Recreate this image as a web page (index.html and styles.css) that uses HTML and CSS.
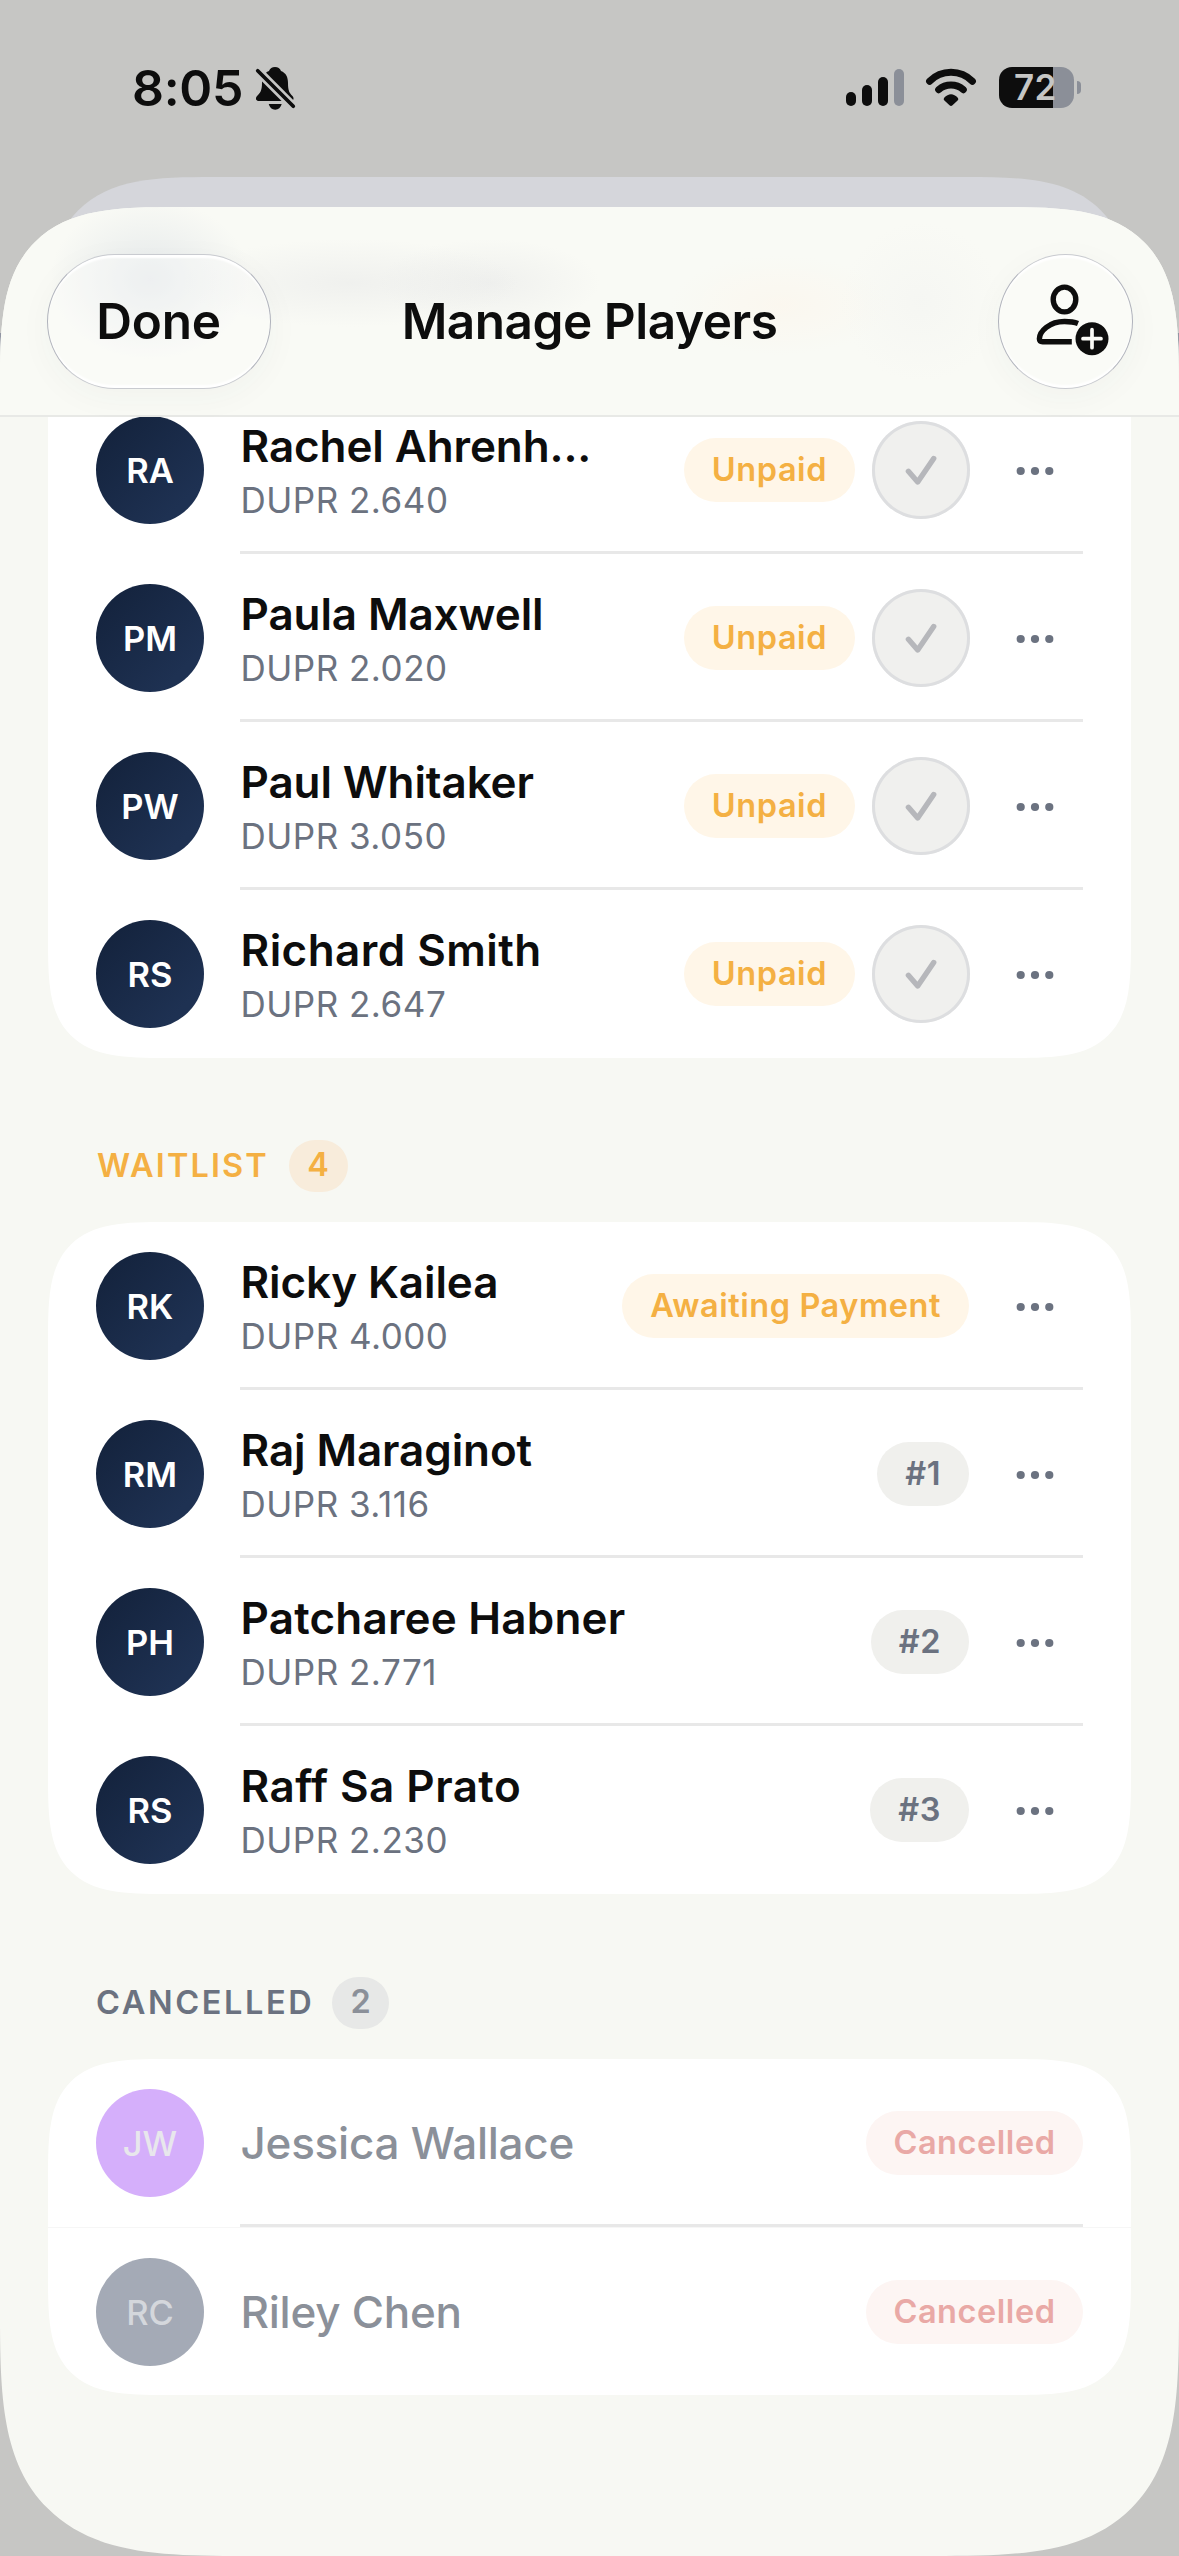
FILE: index.html
```html
<!DOCTYPE html>
<html lang="en">
<head>
<meta charset="utf-8">
<title>Manage Players</title>
<link rel="stylesheet" href="styles.css">
</head>
<body>
<svg class="defs" aria-hidden="true">
  <symbol id="check" viewBox="0 0 98 98"><path d="M36.4 50.3 45.7 61 61.7 37.5" fill="none" stroke="#b6b7bb" stroke-width="5.4" stroke-linecap="round" stroke-linejoin="round"/></symbol>
  <symbol id="more" viewBox="0 0 40 10"><g fill="#6b7280"><circle cx="5.7" cy="5" r="4.1"/><circle cx="20" cy="5" r="4.1"/><circle cx="34.3" cy="5" r="4.1"/></g></symbol>
</svg>
<div class="screen">
  <div class="sheet-behind"></div>
  <div class="status">
    <div class="status-left">
      <span class="time">8:05</span>
      <svg class="bell" viewBox="14 10 42 46">
        <path fill="#0d0d0d" d="M35 12c-3 0-5 1.500-6 4C24 18 22 22 22 28 22 36 20 38 17 41c-2 2.500-1 5 2 5h31.500c3 0 4-2.500 2-5C49.500 38 48 36 48 28 48 22 46 18 41 16 40 13.500 38 12 35 12zM28.700 49h13q-1.500 5.700-6.500 5.700t-6.500-5.700z"/>
        <path d="M17.700 15.700 53.300 51.300" stroke="#c6c6c4" stroke-width="9"/>
        <path d="M17.700 15.700 53.300 51.300" stroke="#0d0d0d" stroke-width="3.700" stroke-linecap="round"/>
      </svg>
    </div>
    <div class="status-right">
      <div class="signal"><i class="b1"></i><i class="b2"></i><i class="b3"></i><i class="b4"></i></div>
      <svg class="wifi" viewBox="95 17 52 41">
        <g fill="none" stroke="#0d0d0d" stroke-width="7" stroke-linecap="round"><path d="M99.600 31.200a30 30 0 0 1 42.800 0"/><path d="M108.700 39.700a18.700 18.700 0 0 1 24.600 0"/></g>
        <path fill="#0d0d0d" d="M114 48Q121 40.500 128 48q.8 1.500-.4 2.600L122.500 55.300q-1.500 1.200-3 0L114.400 50.600Q113.200 49.500 114 48z"/>
      </svg>
      <div class="battery"><div class="battery-body">72</div><div class="battery-nub"></div></div>
    </div>
  </div>

  <main class="sheet">
    <header class="bar">
      <button class="glass done">Done</button>
      <h1 class="title">Manage Players</h1>
      <button class="glass add" aria-label="Add player">
        <svg viewBox="12.500 13.500 135 135">
          <g fill="none" stroke="#0d0d0d" stroke-width="5.400">
            <ellipse cx="80" cy="59" rx="11.300" ry="12.400"/>
            <path d="M93.500 83C89.500 81.400 84.500 81 80 81 65 81 54.900 91 54.900 98.300c0 2 1.100 3 3.200 3H87.300"/>
          </g>
          <circle cx="107.500" cy="98.200" r="16.500" fill="#0d0d0d"/>
          <path d="M98.500 98.200h18M107.500 89.200v18" stroke="#fafaf6" stroke-width="3.700" stroke-linecap="round"/>
        </svg>
      </button>
    </header>

    <div class="list">
      <section class="card card-first">
        <div class="row"><div class="avatar">RA</div><div class="who"><div class="name">Rachel Ahrenh...</div><div class="rating">DUPR 2.640</div></div><span class="pill amber">Unpaid</span><span class="tick"><svg><use href="#check"/></svg></span><span class="more"><svg><use href="#more"/></svg></span></div>
        <div class="row"><div class="avatar">PM</div><div class="who"><div class="name">Paula Maxwell</div><div class="rating">DUPR 2.020</div></div><span class="pill amber">Unpaid</span><span class="tick"><svg><use href="#check"/></svg></span><span class="more"><svg><use href="#more"/></svg></span></div>
        <div class="row"><div class="avatar">PW</div><div class="who"><div class="name">Paul Whitaker</div><div class="rating">DUPR 3.050</div></div><span class="pill amber">Unpaid</span><span class="tick"><svg><use href="#check"/></svg></span><span class="more"><svg><use href="#more"/></svg></span></div>
        <div class="row"><div class="avatar">RS</div><div class="who"><div class="name name-wide">Richard Smith</div><div class="rating">DUPR 2.647</div></div><span class="pill amber">Unpaid</span><span class="tick"><svg><use href="#check"/></svg></span><span class="more"><svg><use href="#more"/></svg></span></div>
      </section>

      <h2 class="section waitlist">WAITLIST<span class="count">4</span></h2>
      <section class="card">
        <div class="row"><div class="avatar">RK</div><div class="who"><div class="name">Ricky Kailea</div><div class="rating">DUPR 4.000</div></div><span class="pill amber">Awaiting Payment</span><span class="more"><svg><use href="#more"/></svg></span></div>
        <div class="row"><div class="avatar">RM</div><div class="who"><div class="name">Raj Maraginot</div><div class="rating">DUPR 3.116</div></div><span class="pill grey">#1</span><span class="more"><svg><use href="#more"/></svg></span></div>
        <div class="row"><div class="avatar">PH</div><div class="who"><div class="name name-open">Patcharee Habner</div><div class="rating">DUPR 2.771</div></div><span class="pill grey">#2</span><span class="more"><svg><use href="#more"/></svg></span></div>
        <div class="row"><div class="avatar">RS</div><div class="who"><div class="name name-wide">Raff Sa Prato</div><div class="rating">DUPR 2.230</div></div><span class="pill grey">#3</span><span class="more"><svg><use href="#more"/></svg></span></div>
      </section>

      <h2 class="section cancelled">CANCELLED<span class="count">2</span></h2>
      <section class="card card-cancelled">
        <div class="row"><div class="avatar violet">JW</div><div class="who"><div class="name">Jessica Wallace</div></div><span class="pill red">Cancelled</span></div>
        <div class="row"><div class="avatar faded">RC</div><div class="who"><div class="name">Riley Chen</div></div><span class="pill red">Cancelled</span></div>
      </section>
    </div>
  </main>
</div>
</body>
</html>
```
FILE: styles.css
```css
* { box-sizing: border-box; margin: 0; padding: 0; }

body { font-family: "Inter", sans-serif; color: #0d0d0d; }

.defs { display: none; }
svg { display: block; }

.screen {
  position: relative;
  display: flex;
  flex-direction: column;
  width: 1179px;
  height: 2556px;
  overflow: hidden;
  background:
    linear-gradient(#8f93a1, #c6c6c4) 0 333px / 100% 40px no-repeat,
    #c6c6c4;
}

/* Edge of the sheet underneath the current one */
.sheet-behind {
  position: absolute;
  top: 177px;
  left: 45px;
  right: 45px;
  height: 200px;
  border-radius: 168px 168px 0 0;
  corner-shape: superellipse(1.65);
  background: #d5d6db;
}

/* Status bar */
.status {
  flex: none;
  display: flex;
  justify-content: space-between;
  align-items: flex-start;
  height: 207px;
  padding: 65px 98px 0 132px;
}
.status-left, .status-right { display: flex; }
.time { font-size: 50px; font-weight: 600; line-height: 46px; letter-spacing: -0.3px; }
.bell { width: 42px; height: 46px; margin-left: 11px; }
.status-right { padding-top: 2px; }
.signal { display: flex; align-items: flex-end; gap: 6px; height: 39px; }
.signal i { width: 10px; border-radius: 5px; background: #0d0d0d; }
.b1 { height: 14px; }
.b2 { height: 21px; }
.b3 { height: 29px; }
.signal .b4 { height: 37px; background: #8b8f98; }
.wifi { width: 52px; height: 41px; margin-left: 21px; }
.battery { display: flex; align-items: center; gap: 3px; height: 41px; margin-left: 22px; }
.battery-body {
  width: 75px;
  height: 41px;
  border-radius: 13px;
  background: linear-gradient(90deg, #0d0d0d 54px, #8b8f98 54px);
  color: #c6c6c4;
  font-size: 35px;
  font-weight: 600;
  line-height: 41px;
  letter-spacing: 0.3px;
  padding-left: 15px;
}
.battery-nub { width: 4px; height: 13px; border-radius: 0 5px 5px 0; background: #8b8f98; }

/* Sheet */
.sheet {
  position: relative;
  flex: 1;
  display: flex;
  flex-direction: column;
  overflow: hidden;
  border-radius: 180px 180px 245px 245px;
  corner-shape: superellipse(1.68);
  background: #f7f8f3;
}
.bar {
  flex: none;
  display: grid;
  grid-template-columns: 1fr auto 1fr;
  align-items: center;
  height: 210px;
  padding: 20px 46.5px 0 46.5px;
  border-bottom: 2px solid #e8e9e6;
  background:
    radial-gradient(ellipse 100px 80px at 150px 72px, rgba(205, 213, 222, 0.45), rgba(205, 213, 222, 0)),
    radial-gradient(ellipse 170px 44px at 350px 76px, rgba(215, 216, 220, 0.28), rgba(215, 216, 220, 0)),
    radial-gradient(ellipse 110px 44px at 490px 76px, rgba(215, 216, 220, 0.28), rgba(215, 216, 220, 0)),
    radial-gradient(ellipse 110px 50px at 780px 98px, rgba(255, 240, 225, 0.3), rgba(255, 240, 225, 0)),
    radial-gradient(ellipse 80px 80px at 921px 95px, rgba(235, 236, 236, 0.25), rgba(235, 236, 236, 0)),
    #f9faf5;
}
.glass {
  height: 135px;
  border: 1.5px solid;
  border-color: #c9cbd0 #b0b3bc;
  border-radius: 68px;
  background: rgba(253, 253, 251, 0.35);
  box-shadow: inset 0 4px 2px -1px #fff, inset 0 -4px 2px -1px #fff, 0 8px 34px rgba(60, 64, 80, 0.04);
  font: inherit;
  color: inherit;
}
.done { width: 224px; font-size: 49.5px; font-weight: 600; letter-spacing: -0.2px; }
.add { width: 135px; justify-self: end; }
.add svg { width: 135px; height: 135px; margin: -1.5px; }
.title { font-size: 49.5px; font-weight: 600; line-height: 60px; letter-spacing: -0.47px; }

.list { flex: 1; overflow: hidden; padding: 0 48px; }
.card {
  border-radius: 119px;
  corner-shape: superellipse(1.71);
  background: #fff;
}
/* The list is scrolled, so its first card starts above the bar's lower edge */
.card-first { margin-top: -31px; border-radius: 0 0 119px 119px; }

.row {
  position: relative;
  display: flex;
  align-items: center;
  height: 168px;
  padding: 0 48px;
}
.row:not(:last-child)::after {
  content: "";
  position: absolute;
  left: 192px;
  right: 48px;
  bottom: 0;
  height: 3px;
  background: #e8e8e8;
}
.avatar {
  flex: none;
  width: 108px;
  height: 108px;
  margin-right: 36px;
  border-radius: 50%;
  background: linear-gradient(135deg, #14233d 10%, #1e3152 80%);
  color: #fff;
  font-size: 34.5px;
  font-weight: 600;
  line-height: 109px;
  text-align: center;
}
.who { flex: 1; min-width: 0; padding: 6px 0 0 0.5px; white-space: nowrap; }
.name { font-size: 44px; font-weight: 600; line-height: 54px; letter-spacing: -0.1px; }
.name-open { letter-spacing: 0.2px; }
.name-wide { letter-spacing: 0.45px; }
.rating { font-size: 35px; line-height: 54px; letter-spacing: 0.5px; color: #6b7280; }

.pill {
  height: 64px;
  padding: 0 28px;
  border-radius: 32px;
  font-size: 32.5px;
  font-weight: 600;
  line-height: 63px;
  letter-spacing: 0.55px;
  white-space: nowrap;
}
.amber { background: #fff6e8; color: #f4b043; }
.grey { background: #f0f0ed; color: #6b7280; }
.red { padding: 0 27.5px; background: #fdf5f3; color: #e9a9a6; }

.tick {
  width: 98px;
  height: 98px;
  margin-left: 17px;
  border-radius: 50%;
  background: #f0f0ee;
  box-shadow: inset 0 0 0 3px #dddee0;
}
.tick svg { width: 98px; height: 98px; }
.more { width: 96px; margin-left: 18px; padding: 2px 28px 0; }
.tick + .more { margin-left: 17px; }
.more svg { width: 40px; height: 10px; }

/* Section headings */
.section {
  display: flex;
  align-items: center;
  gap: 20px;
  height: 164px;
  padding: 82px 48px 30px 49px;
  font-size: 32.5px;
  font-weight: 600;
  line-height: 50px;
}
.count {
  height: 52px;
  padding: 0 18px;
  border-radius: 26px;
  letter-spacing: 0;
}
.waitlist { color: #f4b043; letter-spacing: 2.1px; }
.waitlist .count { background: #f8ecdb; padding: 0 18.5px; }
.cancelled { gap: 18px; height: 165px; padding-top: 83px; padding-left: 48px; color: #6b7280; letter-spacing: 2.6px; }
.cancelled .count { background: #e7e8e7; color: #8b9099; }

.card-cancelled .who { padding-top: 0; }
.card-cancelled .name { color: #8b9099; font-weight: 500; letter-spacing: -0.25px; }
.card-cancelled .row + .row { border-top: 1px solid #f6f6f6; }
.violet { background: #d5affb; color: #e8e7ec; }
.faded { background: #a4aab6; color: #d4d7dc; }
.card-cancelled .avatar { font-weight: 500; }
```
